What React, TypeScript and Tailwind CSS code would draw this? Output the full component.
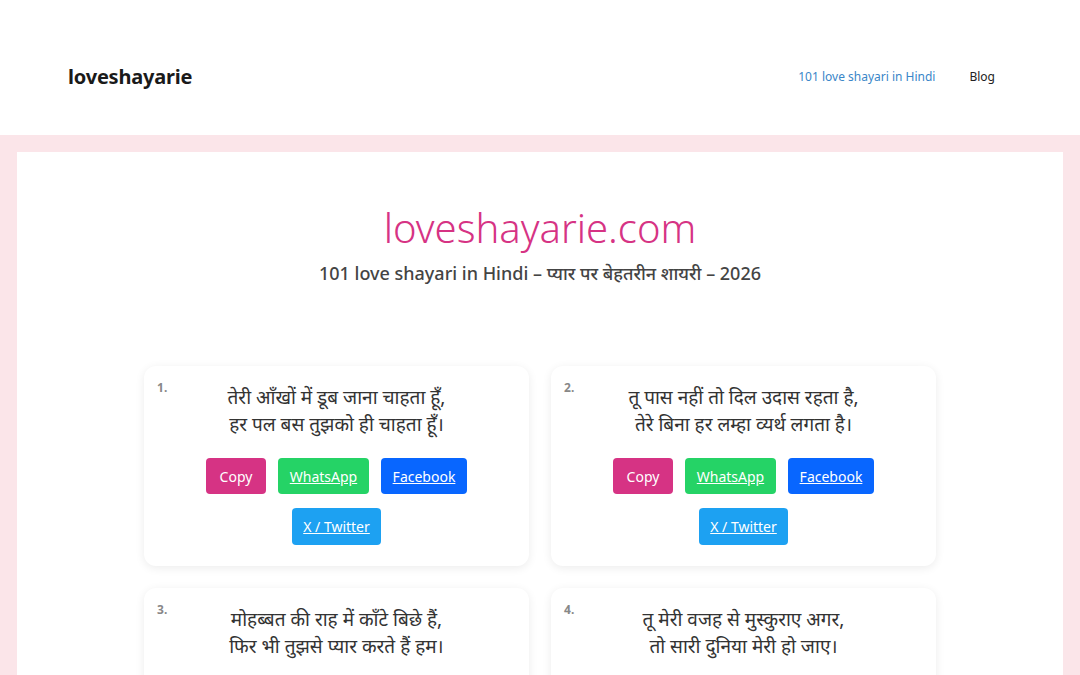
import React from 'react';

const shayaris = [
  ['तेरी आँखों में डूब जाना चाहता हूँ,', 'हर पल बस तुझको ही चाहता हूँ।'],
  ['तू पास नहीं तो दिल उदास रहता है,', 'तेरे बिना हर लम्हा व्यर्थ लगता है।'],
  ['मोहब्बत की राह में काँटे बिछे हैं,', 'फिर भी तुझसे प्यार करते हैं हम।'],
  ['तू मेरी वजह से मुस्कुराए अगर,', 'तो सारी दुनिया मेरी हो जाए।'],
];

const font = { fontFamily: '"Noto Sans", "Noto Sans Devanagari", "Open Sans", sans-serif' };

const Card = ({ n, lines }: { n: number; lines: string[] }) => (
  <div className="bg-white rounded-xl shadow-[0_2px_10px_rgba(0,0,0,0.08)] px-[13px] pt-[14px] pb-[21px]">
    <div className="flex">
      <span className="text-[12px] font-bold text-[#888] leading-none pt-[2px] w-[20px]">{n}.</span>
      <div className="flex-1 text-center text-[19px] leading-[27px] text-[#333] pr-[20px] pt-[4px]">
        {lines[0]}
        <br />
        {lines[1]}
      </div>
    </div>
    <div className="flex flex-wrap justify-center gap-x-[12px] gap-y-[14px] mt-[20px] px-[30px] text-[14px] text-white">
      <button className="h-[36px] w-[60px] rounded-[4px] bg-[#d63384]">Copy</button>
      <a className="h-[36px] w-[91px] rounded-[4px] bg-[#25d366] flex items-center justify-center underline">WhatsApp</a>
      <a className="h-[36px] w-[86px] rounded-[4px] bg-[#0866ff] flex items-center justify-center underline">Facebook</a>
      <a className="h-[37px] w-[89px] rounded-[4px] bg-[#1da1f2] flex items-center justify-center underline">X / Twitter</a>
    </div>
  </div>
);

export default function App() {
  return (
    <div className="min-h-screen bg-[#fbe5e9]" style={font}>
      {/* Header */}
      <header className="bg-white h-[135px] flex items-center justify-between pl-[68px] pr-[85px] pt-[18px]">
        <div className="text-[20px] font-bold text-[#1a1a1a] tracking-[-0.2px]">loveshayarie</div>
        <nav className="flex items-center gap-[34px] text-[12px]">
          <a className="text-[#3a86c8]">101 love shayari in Hindi</a>
          <a className="text-[#222]">Blog</a>
        </nav>
      </header>

      {/* Main */}
      <main className="px-[17px] pt-[17px]">
        <div className="bg-white pt-[52px] pb-[40px]">
          <h1 className="text-center text-[40px] font-light text-[#d63384] leading-[48px]">loveshayarie.com</h1>
          <p className="text-center text-[18px] font-medium text-[#444] mt-[8px] leading-[26px]">
            101 love shayari in Hindi – प्यार पर बेहतरीन शायरी – 2026
          </p>
          <div className="grid grid-cols-2 gap-[22px] w-[792px] mx-auto mt-[80px]">
            {shayaris.map((s, i) => (
              <Card key={i} n={i + 1} lines={s} />
            ))}
          </div>
        </div>
      </main>
    </div>
  );
}
